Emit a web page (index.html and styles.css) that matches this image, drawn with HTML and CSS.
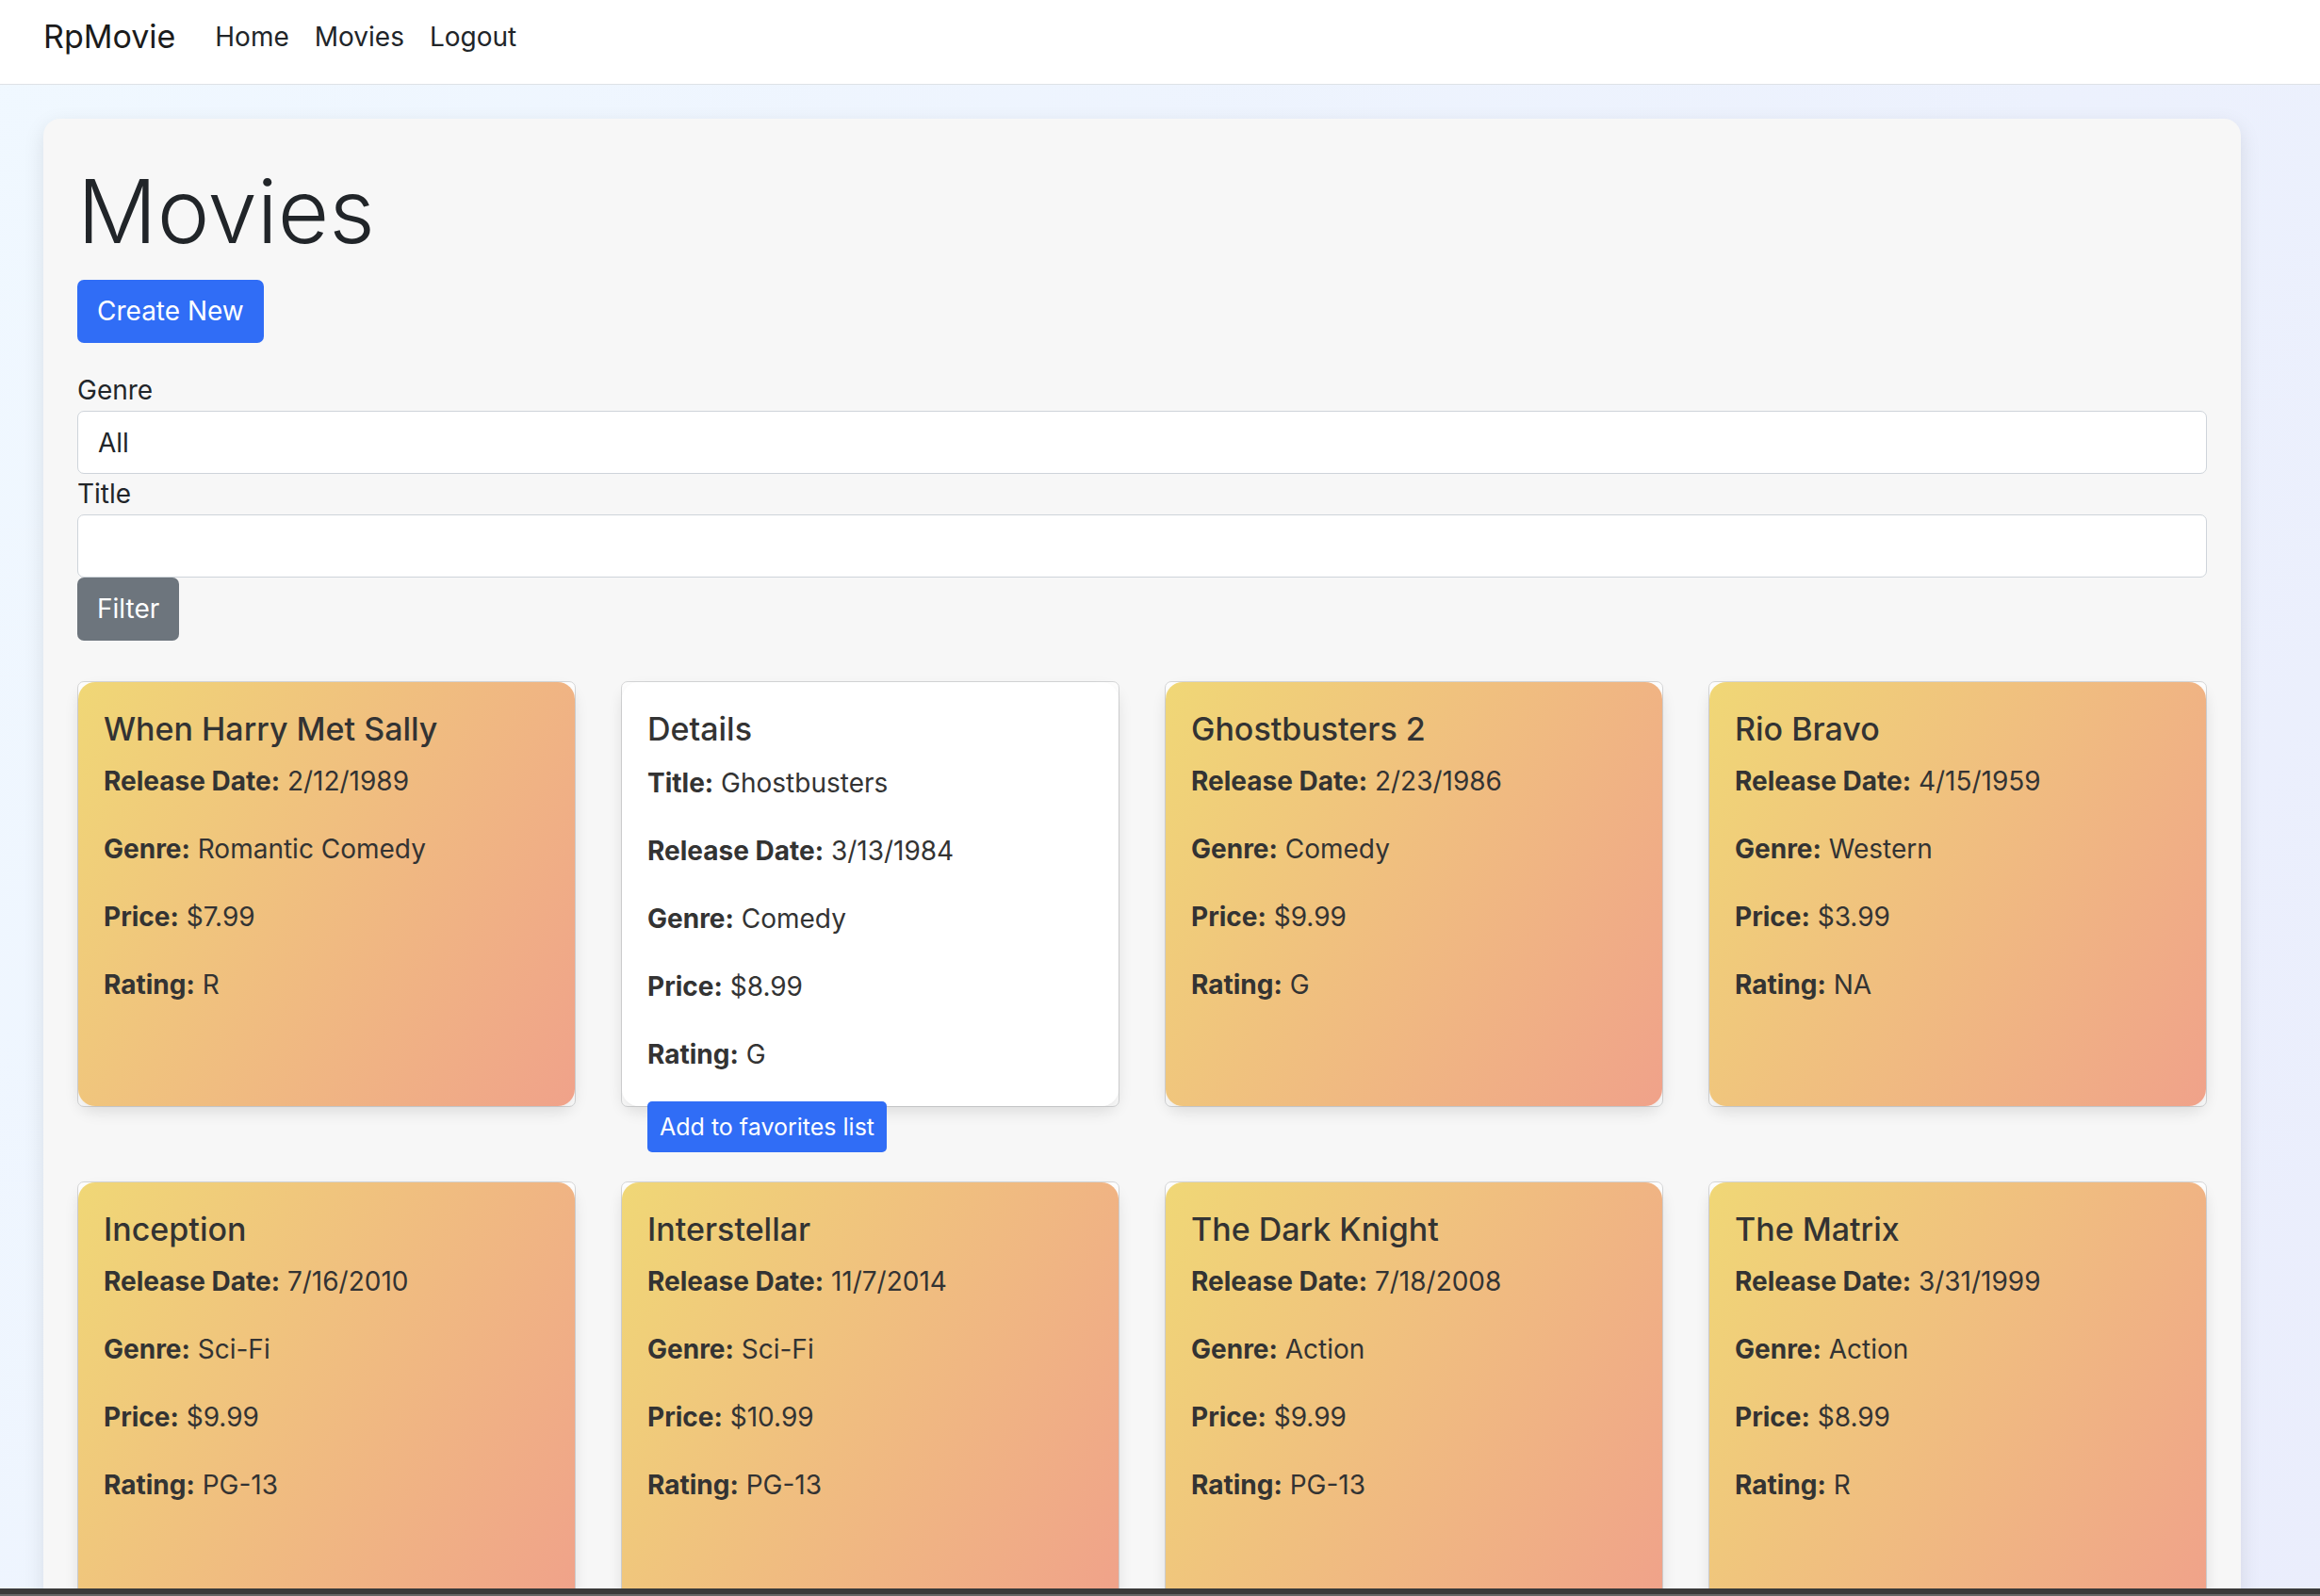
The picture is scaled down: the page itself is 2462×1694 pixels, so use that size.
FILE: index.html
```html
<!DOCTYPE html>
<html lang="en">
<head>
<meta charset="utf-8">
<meta name="viewport" content="width=device-width, initial-scale=1">
<title>Movies - RpMovie</title>
<link rel="stylesheet" href="styles.css">
</head>
<body>
<header class="navbar">
  <a class="brand" href="#">RpMovie</a>
  <nav class="nav-links">
    <a href="#">Home</a>
    <a href="#">Movies</a>
    <a href="#">Logout</a>
  </nav>
</header>
<main class="content">
  <section class="panel">
    <h1 class="page-title">Movies</h1>
    <a class="btn btn-primary" href="#">Create New</a>
    <form class="filter">
      <label for="genre">Genre</label>
      <select id="genre" class="field"><option>All</option><option>Action</option><option>Comedy</option><option>Romantic Comedy</option><option>Sci-Fi</option><option>Western</option></select>
      <label for="title">Title</label>
      <input id="title" class="field" type="text">
      <button class="btn btn-secondary" type="button">Filter</button>
    </form>
    <div class="movies">
      <article class="card"><div class="face front">
        <h2>When Harry Met Sally</h2>
        <p><strong>Release Date:</strong> 2/12/1989</p>
        <p><strong>Genre:</strong> Romantic Comedy</p>
        <p><strong>Price:</strong> $7.99</p>
        <p><strong>Rating:</strong> R</p>
      </div></article>
      <article class="card"><div class="face back">
        <h2>Details</h2>
        <p><strong>Title:</strong> Ghostbusters</p>
        <p><strong>Release Date:</strong> 3/13/1984</p>
        <p><strong>Genre:</strong> Comedy</p>
        <p><strong>Price:</strong> $8.99</p>
        <p><strong>Rating:</strong> G</p>
        <button class="btn btn-primary btn-small" type="button">Add to favorites list</button>
      </div></article>
      <article class="card"><div class="face front">
        <h2>Ghostbusters 2</h2>
        <p><strong>Release Date:</strong> 2/23/1986</p>
        <p><strong>Genre:</strong> Comedy</p>
        <p><strong>Price:</strong> $9.99</p>
        <p><strong>Rating:</strong> G</p>
      </div></article>
      <article class="card"><div class="face front">
        <h2>Rio Bravo</h2>
        <p><strong>Release Date:</strong> 4/15/1959</p>
        <p><strong>Genre:</strong> Western</p>
        <p><strong>Price:</strong> $3.99</p>
        <p><strong>Rating:</strong> NA</p>
      </div></article>
      <article class="card"><div class="face front">
        <h2>Inception</h2>
        <p><strong>Release Date:</strong> 7/16/2010</p>
        <p><strong>Genre:</strong> Sci-Fi</p>
        <p><strong>Price:</strong> $9.99</p>
        <p><strong>Rating:</strong> PG-13</p>
      </div></article>
      <article class="card"><div class="face front">
        <h2>Interstellar</h2>
        <p><strong>Release Date:</strong> 11/7/2014</p>
        <p><strong>Genre:</strong> Sci-Fi</p>
        <p><strong>Price:</strong> $10.99</p>
        <p><strong>Rating:</strong> PG-13</p>
      </div></article>
      <article class="card"><div class="face front">
        <h2>The Dark Knight</h2>
        <p><strong>Release Date:</strong> 7/18/2008</p>
        <p><strong>Genre:</strong> Action</p>
        <p><strong>Price:</strong> $9.99</p>
        <p><strong>Rating:</strong> PG-13</p>
      </div></article>
      <article class="card"><div class="face front">
        <h2>The Matrix</h2>
        <p><strong>Release Date:</strong> 3/31/1999</p>
        <p><strong>Genre:</strong> Action</p>
        <p><strong>Price:</strong> $8.99</p>
        <p><strong>Rating:</strong> R</p>
      </div></article>
    </div>
  </section>
</main>
<footer class="bottom-strip"></footer>
</body>
</html>
```
FILE: styles.css
```css
* { box-sizing: border-box; }

body {
  margin: 0;
  height: 100vh;
  display: flex;
  flex-direction: column;
  font-family: Inter, "Liberation Sans", sans-serif;
  font-size: 28px;
  line-height: 44px;
  color: #212529;
  background: linear-gradient(120deg, #f0f8ff, #e6e6fa 167%);
}

a { color: inherit; text-decoration: none; }

.navbar {
  display: flex;
  align-items: center;
  gap: 42px;
  padding: 13px 46px 24px;
  background: #fff;
  border-bottom: 1px solid #dee2e6;
}
.brand { font-size: 34px; line-height: 52px; color: #1b1b1b; }
.nav-links { display: flex; gap: 27px; }

.content {
  flex: 1;
  min-height: 0;
  overflow-y: auto;
  scrollbar-width: none;
  padding: 36px 84px 36px 46px;
}
.panel {
  padding: 36px;
  background: #f7f7f7;
  border-radius: 18px;
  box-shadow: 0 7px 22px rgba(0, 0, 0, 0.1);
}
.page-title {
  margin: 0 0 10px;
  font-size: 94px;
  line-height: 125px;
  font-weight: 300;
}

.btn {
  display: block;
  width: fit-content;
  padding: 10px 20px;
  border: 1px solid transparent;
  border-radius: 7px;
  font: inherit;
  line-height: 45px;
  color: #fff;
  cursor: pointer;
}
.btn-primary { background: #306df6; }
.btn-secondary { background: #6d757d; }
.btn-small {
  padding: 7px 12px;
  border-radius: 5px;
  font-size: 25px;
  line-height: 38px;
}

.filter { margin: 29px 0 43px; }
.filter label { display: block; line-height: 43px; }
.field {
  display: block;
  width: 100%;
  height: 67px;
  padding: 0 21px;
  appearance: none;
  border: 1px solid #ced4da;
  border-radius: 7px;
  background: #fff;
  font: inherit;
  color: inherit;
}

.movies {
  display: grid;
  grid-template-columns: repeat(4, 1fr);
  gap: 79px 48px;
}
.card {
  height: 452px;
  border: 1px solid #d5d6d7;
  border-radius: 7px;
  background: #fff;
}
.face {
  height: 100%;
  padding: 28px 27px;
  border-radius: 18px;
  box-shadow: 0 7px 15px rgba(0, 0, 0, 0.1);
  color: #333;
}
.front { background: linear-gradient(120deg, #f0d776, #f0a28a); }
.back { background: #fff; }
.face h2 {
  margin: 0 0 12px;
  font-size: 34px;
  line-height: 43px;
  font-weight: 500;
}
.face p { margin: 0 0 28px; }
.back h2 { margin-bottom: 14px; }

.bottom-strip {
  height: 8px;
  background: #3a3a3a;
  border-bottom: 2px solid #666;
}
```
